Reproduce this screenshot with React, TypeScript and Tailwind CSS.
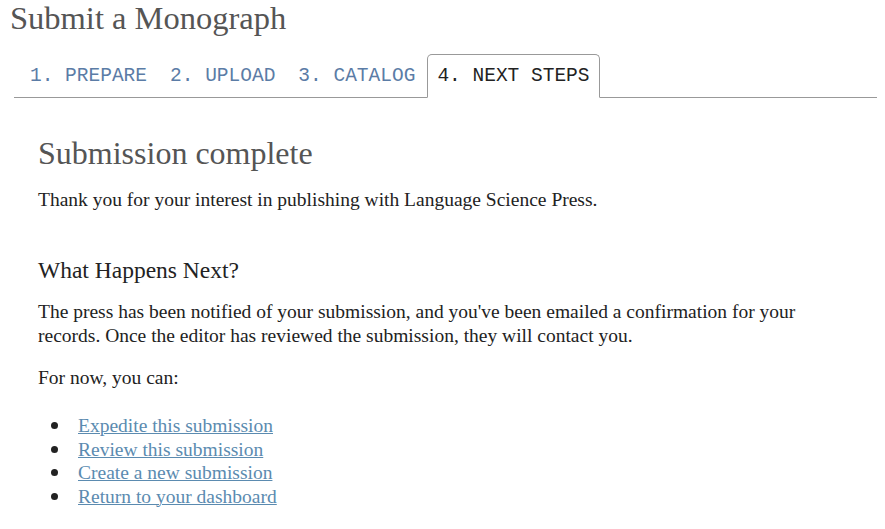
import React from "react";

const serif = { fontFamily: '"Liberation Serif", "Times New Roman", serif' };
const mono = { fontFamily: '"Liberation Mono", "Courier New", monospace' };

export default function App() {
  const tabs = ["1. PREPARE", "2. UPLOAD", "3. CATALOG"];
  const links = [
    "Expedite this submission",
    "Review this submission",
    "Create a new submission",
    "Return to your dashboard",
  ];
  return (
    <div className="w-[885px] h-[529px] bg-white overflow-hidden" style={serif}>
      <h1 className="pl-[10px] pt-px text-[32.5px] leading-[35px] text-[#555] font-normal">
        Submit a Monograph
      </h1>
      <div className="ml-[14px] mr-[8px] mt-[18px] flex items-end h-[44px] border-b border-[#999]" style={mono}>
        {tabs.map((t) => (
          <div key={t} className="ml-[3px] first:ml-[6px] px-[10px] pt-[2px] h-[43px] flex items-center text-[19.5px] text-[#5b7ca6] leading-none">
            {t}
          </div>
        ))}
        <div className="ml-[2px] -mb-px px-[9px] pt-[2px] h-[44px] flex items-center bg-white border border-[#999] border-b-white rounded-t-[5px] text-[19.5px] text-[#222] leading-none">
          4. NEXT STEPS
        </div>
      </div>
      <div className="px-[38px] text-[#222]">
        <h2 className="mt-[36px] text-[32px] leading-[38px] text-[#555] font-normal">Submission complete</h2>
        <p className="mt-[16px] text-[19.5px] leading-[24px]">
          Thank you for your interest in publishing with Language Science Press.
        </p>
        <h3 className="mt-[44px] text-[23.5px] leading-[28px] font-normal">What Happens Next?</h3>
        <p className="mt-[16px] text-[19.5px] leading-[24px] w-[801px]">
          The press has been notified of your submission, and you've been emailed a confirmation for your records. Once the editor has reviewed the submission, they will contact you.
        </p>
        <p className="mt-[18px] text-[19.5px] leading-[24px]">For now, you can:</p>
        <ul className="mt-[24px] text-[19.5px] leading-[23.5px]">
          {links.map((l) => (
            <li key={l} className="flex items-center">
              <span className="w-[40px] flex justify-start pl-[13px]">
                <span className="block w-[7px] h-[7px] rounded-full bg-[#222]" />
              </span>
              <a href="#" className="text-[#5b8bb0] underline decoration-1">
                {l}
              </a>
            </li>
          ))}
        </ul>
      </div>
    </div>
  );
}
